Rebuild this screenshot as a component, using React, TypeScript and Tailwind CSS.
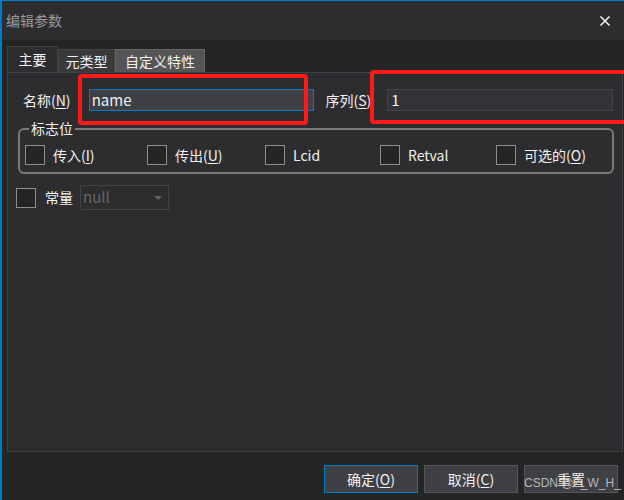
import { X } from 'lucide-react';

const FONT = { fontFamily: '"Microsoft YaHei", "Noto Sans CJK SC", "Noto Sans", sans-serif' };

function Box({ className = '' }: { className?: string }) {
  return <span className={`inline-block w-[20px] h-[20px] border border-[#8e8e8e] bg-[#252526] ${className}`} />;
}

function Check({ label, hot, width }: { label: string; hot?: string; width: string }) {
  return (
    <div className={`flex items-center ${width}`}>
      <Box />
      <span className="ml-[8px] text-[14px] text-[#f1f1f1]">
        {label}
        {hot && (
          <>
            (<span className="underline underline-offset-2">{hot}</span>)
          </>
        )}
      </span>
    </div>
  );
}

export default function App() {
  return (
    <div className="relative w-[624px] h-[500px] bg-[#252526] border-l-2 border-t border-[#007acc] overflow-hidden" style={FONT}>
      {/* title bar */}
      <div className="h-[39px] bg-[#2d2d30] flex items-center justify-between pl-[4px] pr-[11px]">
        <span className="text-[14px] text-[#999999]">编辑参数</span>
        <X size={16} strokeWidth={2.5} className="text-[#f1f1f1]" />
      </div>

      {/* tabs */}
      <div className="flex items-end h-[32px] pl-[5px]">
        <div className="h-[26px] w-[51px] bg-[#2d2d30] border-t border-x border-[#3f3f46] flex items-center justify-center text-[14px] text-[#f1f1f1]">主要</div>
        <div className="h-[23px] w-[57px] bg-[#3a3a3d] border border-b-0 border-[#434346] flex items-center justify-center text-[14px] text-[#f1f1f1]">元类型</div>
        <div className="h-[23px] w-[90px] bg-[#555558] border border-b-0 border-[#666669] flex items-center justify-center text-[14px] text-[#f1f1f1]">自定义特性</div>
      </div>

      {/* panel */}
      <div className="ml-[5px] mr-[1px] h-[380px] bg-[#2d2d30] border border-[#3f3f46] pt-[16px] pl-[9px] pr-[9px]">
        <div className="flex items-center h-[22px]">
          <span className="w-[72px] pl-[6px] text-[14px] text-[#f1f1f1]">
            名称(<span className="underline underline-offset-2">N</span>)
          </span>
          <div className="w-[227px] h-[22px] bg-[#3f3f46] border border-[#007acc] flex items-center pl-[2px] text-[15px] text-[#f1f1f1]">name</div>
          <span className="ml-[11px] w-[62px] text-[14px] text-[#f1f1f1]">
            序列(<span className="underline underline-offset-2">S</span>)
          </span>
          <div className="w-[227px] h-[22px] bg-[#333337] border border-[#434346] flex items-center pl-[3px] text-[15px] text-[#f1f1f1]">1</div>
        </div>

        {/* group box */}
        <div className="relative mt-[17px] ml-[1px] w-[596px] h-[46px] border-2 border-[#7a7a7a] rounded-[6px] flex items-center pl-[5px] pt-[8px]">
          <span className="absolute left-[9px] top-[-12px] px-[2px] bg-[#2d2d30] text-[14px] text-[#f1f1f1] leading-[20px]">标志位</span>
          <Check label="传入" hot="I" width="w-[122px]" />
          <Check label="传出" hot="U" width="w-[118px]" />
          <Check label="Lcid" width="w-[115px]" />
          <Check label="Retval" width="w-[116px]" />
          <Check label="可选的" hot="O" width="w-[110px]" />
        </div>

        {/* constant */}
        <div className="flex items-center mt-[11px] -ml-[1px]">
          <Box />
          <span className="ml-[9px] text-[14px] text-[#f1f1f1]">常量</span>
          <div className="ml-[7px] w-[89px] h-[25px] border border-[#434346] bg-[#2d2d30] flex items-center justify-between pl-[2px] pr-[6px]">
            <span className="text-[15px] text-[#656565]">null</span>
            <span className="w-0 h-0 border-x-[4px] border-x-transparent border-t-[4px] border-t-[#656565]" />
          </div>
        </div>
      </div>

      {/* buttons */}
      <div className="flex justify-end gap-[6px] pr-[6px] mt-[13px]">
        <div className="w-[94px] h-[28px] bg-[#3f3f46] border border-[#007acc] flex items-center justify-center text-[14px] text-[#f1f1f1]">
          确定(<span className="underline underline-offset-2">O</span>)
        </div>
        <div className="w-[94px] h-[28px] bg-[#3f3f46] border border-[#555558] flex items-center justify-center text-[14px] text-[#f1f1f1]">
          取消(<span className="underline underline-offset-2">C</span>)
        </div>
        <div className="w-[94px] h-[28px] bg-[#3f3f46] border border-[#555558] flex items-center justify-center text-[14px] text-[#f1f1f1]">重置</div>
      </div>

      {/* annotations overlay */}
      <div className="absolute left-[76px] top-[73px] w-[230px] h-[51px] border-[4px] border-[#ff1a1a] rounded-[4px]" />
      <div className="absolute left-[368px] top-[69px] w-[258px] h-[54px] border-[4px] border-[#ff1a1a] rounded-[4px]" />
      <span className="absolute left-[522px] top-[475px] whitespace-nowrap text-[12px] leading-[14px] text-[#b8b8b8]" style={{ fontFamily: '"Liberation Sans", sans-serif' }}>
        CSDN @Z_W_H_
      </span>
    </div>
  );
}
